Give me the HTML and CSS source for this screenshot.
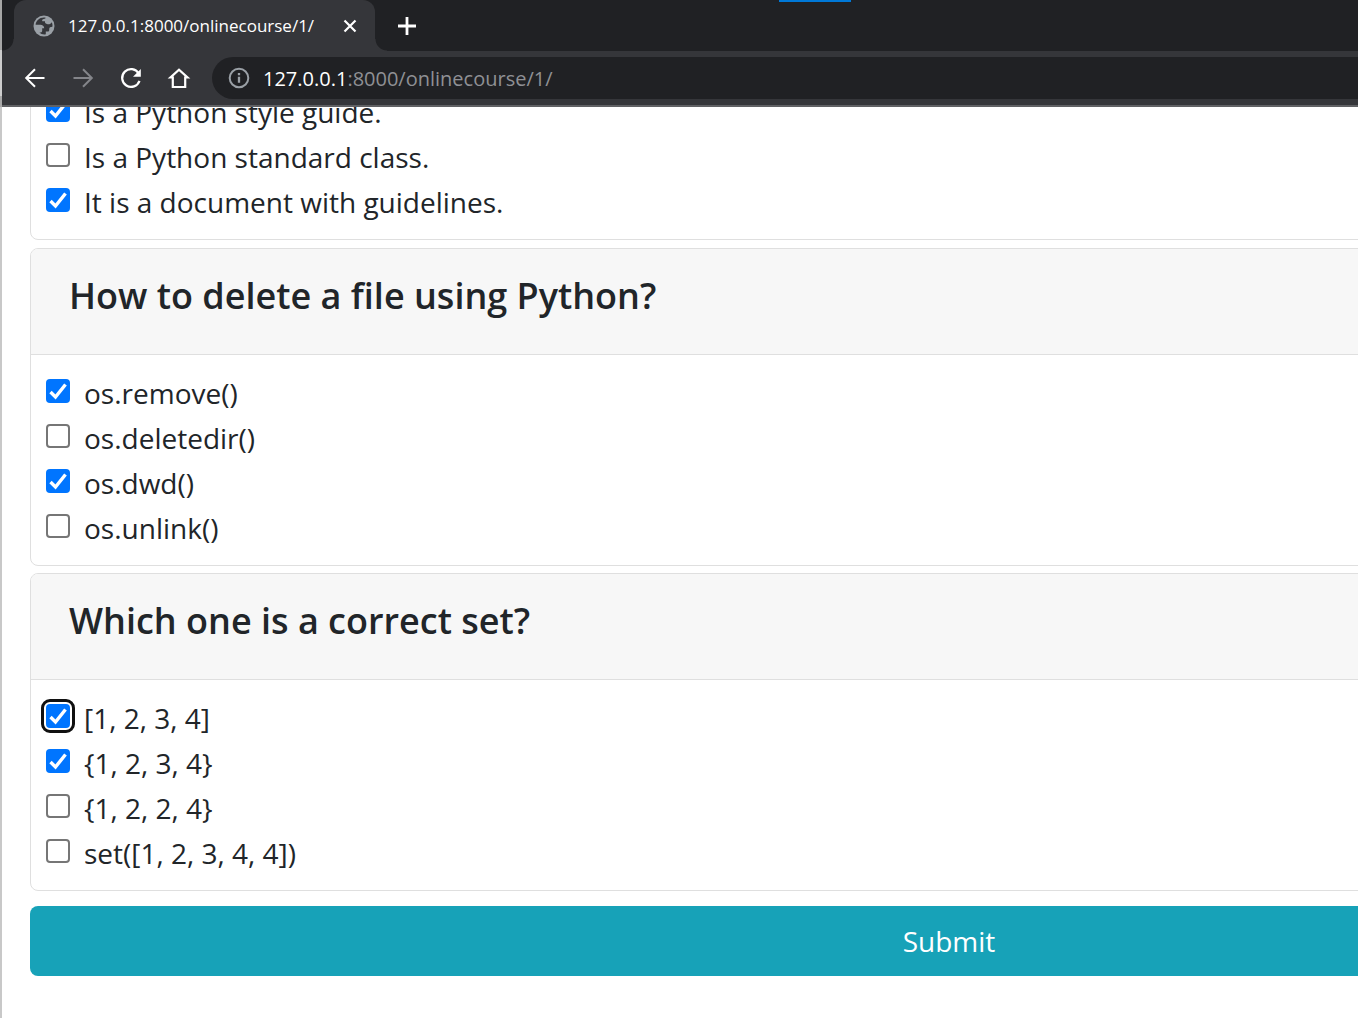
FILE: index.html
```html
<!DOCTYPE html>
<html lang="en">
<head>
<meta charset="utf-8">
<title>127.0.0.1:8000/onlinecourse/1/</title>
<link rel="stylesheet" href="styles.css">
</head>
<body>
<div class="browser">
  <header class="chrome">
    <div class="tab-strip">
      <div class="tab">
        <svg class="icon-globe" viewBox="0 0 22 22" aria-hidden="true"><circle cx="11" cy="11" r="10.5" fill="#9aa0a6"/><path d="M12.400 2.600C7 1.800 3 5.500 2.600 9.700H7.200C9.600 9.700 11.200 11 11.200 13.200H9.200V15.400C9.200 17 8 17.700 6.400 17.600 8 19.200 10.600 19.800 12.800 19.300V16.600H14.600C16 16.600 16.400 15.400 16.200 14.200 16.200 12.600 17.400 11.800 19.400 11.800 19.700 10 19.400 8.400 18.700 7.200 17.600 9.400 15.700 9.600 13.900 9 12.200 8.500 11.800 7.400 12 6.200H9.400C8.400 5.200 9.800 3.900 12.400 3.600Z" fill="#35363a"/></svg>
        <span class="tab-title">127.0.0.1:8000/onlinecourse/1/</span>
        <button class="tab-close" aria-label="Close tab"><svg viewBox="0 0 14 14" width="14" height="14"><path d="M1.500 1.500l11 11M12.500 1.500l-11 11" stroke="#fff" stroke-width="2.200"/></svg></button>
      </div>
      <button class="new-tab" aria-label="New tab"><svg viewBox="0 0 18 18" width="18" height="18"><path d="M9 0v18M0 9h18" stroke="#fff" stroke-width="2.800"/></svg></button>
      <div class="accent"></div>
    </div>
    <nav class="toolbar">
      <button aria-label="Back"><svg viewBox="0 0 24 24" width="24" height="24"><path d="M21.500 12H4M12 3.200L3.200 12l8.800 8.800" fill="none" stroke="#fff" stroke-width="2"/></svg></button>
      <button aria-label="Forward"><svg viewBox="0 0 24 24" width="24" height="24"><path d="M2.500 12H20M12 3.200L20.800 12 12 20.800" fill="none" stroke="#84858a" stroke-width="2"/></svg></button>
      <button aria-label="Reload"><svg viewBox="0 0 24 24" width="24" height="24"><path d="M19.700 7.400A8.900 8.900 0 1 0 20.500 14.800" fill="none" stroke="#fff" stroke-width="2.200"/><path d="M21.800 3v7.800H14Z" fill="#fff"/></svg></button>
      <button aria-label="Home"><svg viewBox="0 0 24 24" width="24" height="24"><path d="M5.800 11.500H3.500L12 3.800l8.500 7.700H18.200V21H5.800Z" fill="none" stroke="#fff" stroke-width="2.200"/></svg></button>
      <div class="address">
        <svg viewBox="0 0 22 22" width="22" height="22" aria-hidden="true"><circle cx="11" cy="11" r="9.300" fill="none" stroke="#9aa0a6" stroke-width="2"/><path d="M11 9.700v6M11 6v2.300" stroke="#9aa0a6" stroke-width="2.300"/></svg>
        <span class="url"><span class="host">127.0.0.1</span>:8000/onlinecourse/1/</span>
      </div>
    </nav>
  </header>
  <main class="page">
    <form class="quiz">
      <section class="card card-scrolled">
        <div class="choices">
          <label><input type="checkbox" checked>Is a Python style guide.</label>
          <label><input type="checkbox">Is a Python standard class.</label>
          <label><input type="checkbox" checked>It is a document with guidelines.</label>
        </div>
      </section>
      <section class="card">
        <h2>How to delete a file using Python?</h2>
        <div class="choices">
          <label><input type="checkbox" checked>os.remove()</label>
          <label><input type="checkbox">os.deletedir()</label>
          <label><input type="checkbox" checked>os.dwd()</label>
          <label><input type="checkbox">os.unlink()</label>
        </div>
      </section>
      <section class="card">
        <h2>Which one is a correct set?</h2>
        <div class="choices">
          <label><input type="checkbox" class="focused" checked>[1, 2, 3, 4]</label>
          <label><input type="checkbox" checked>{1, 2, 3, 4}</label>
          <label><input type="checkbox">{1, 2, 2, 4}</label>
          <label><input type="checkbox">set([1, 2, 3, 4, 4])</label>
        </div>
      </section>
      <button class="submit" type="submit">Submit</button>
    </form>
  </main>
</div>
</body>
</html>
```
FILE: styles.css
```css
* { box-sizing: border-box; }
body {
  margin: 0;
  font-family: "Open Sans", "Noto Sans", sans-serif;
  font-variant-ligatures: none;
  color: #212529;
  background: #fff;
}
.browser {
  display: flex;
  flex-direction: column;
  height: 100vh;
  padding-left: 2px;
  overflow: hidden;
  background: linear-gradient(#a6a6a6 0 50px, #cdcdcd 50px 96px, #a8a8a8 96px 107px, #c8c8c8 107px);
}
button { font: inherit; border: 0; padding: 0; background: none; }
svg { display: block; }

.chrome { flex: none; background: #35363a; border-bottom: 2px solid #606164; }
.tab-strip {
  position: relative;
  display: flex;
  height: 51px;
  padding-left: 12px;
  background: #202124;
}
.tab {
  position: relative;
  display: flex;
  align-items: center;
  width: 361px;
  padding: 0 18px 0 19px;
  border-radius: 12px 12px 0 0;
  background: #35363a;
  color: #fff;
  font-size: 17px;
}
.tab::before, .tab::after {
  content: "";
  position: absolute;
  bottom: 0;
  width: 12px;
  height: 12px;
}
.tab::before { right: 100%; background: radial-gradient(circle at 0 0, transparent 11px, #35363a 12px); }
.tab::after { left: 100%; background: radial-gradient(circle at 100% 0, transparent 11px, #35363a 12px); }
.icon-globe { width: 22px; height: 22px; margin-right: 13px; }
.tab-title { flex: 1; white-space: nowrap; }
.new-tab { display: grid; place-items: center; width: 64px; }
.accent { position: absolute; top: 0; left: 777px; width: 72px; height: 2px; background: #0078d7; }
.toolbar { display: flex; align-items: center; gap: 24px; height: 54px; padding-left: 21px; }
.address {
  display: flex;
  align-items: center;
  flex: 1;
  gap: 13px;
  height: 42px;
  margin-left: -3px;
  padding-left: 16px;
  border-radius: 21px 0 0 21px;
  background: #202124;
  color: #8f9094;
  font-size: 20px;
}
.host { color: #fff; }

.page { flex: 1; min-height: 0; padding-left: 28px; overflow: hidden; background: #fff; }
.quiz { display: flex; flex-direction: column; gap: 7px; margin-right: -510px; }
.card { border: 1px solid #dfdfdf; border-radius: 8px; background: #fff; overflow: hidden; }
.card-scrolled { margin-top: -34px; margin-bottom: 1px; }
h2 {
  margin: 0;
  height: 106px;
  padding: 20px 38px;
  border-bottom: 1px solid #dfdfdf;
  background: #f7f7f7;
  font-size: 36px;
  line-height: 54px;
  font-weight: 600;
}
.choices { display: flex; flex-direction: column; padding: 16px 15px 14px; }
label { display: flex; gap: 14px; height: 45px; font-size: 28px; line-height: 45px; }
input {
  appearance: none;
  width: 24px;
  height: 24px;
  margin: 8px 0 0;
  border: 2px solid #767676;
  border-radius: 4px;
  background: #fff;
}
input:checked {
  border: 0;
  background: #0075ff url("data:image/svg+xml,%3Csvg xmlns='http://www.w3.org/2000/svg' viewBox='0 0 24 24'%3E%3Cpath d='M4.500 13l5 5L19.500 5.500' fill='none' stroke='%23fff' stroke-width='3.400'/%3E%3C/svg%3E") center / 24px;
}
.focused { outline: 3px solid #101010; outline-offset: 2px; }
.submit {
  height: 70px;
  margin-top: 8px;
  border-radius: 8px;
  background: #17a2b8;
  color: #fff;
  font-size: 28px;
}
```
